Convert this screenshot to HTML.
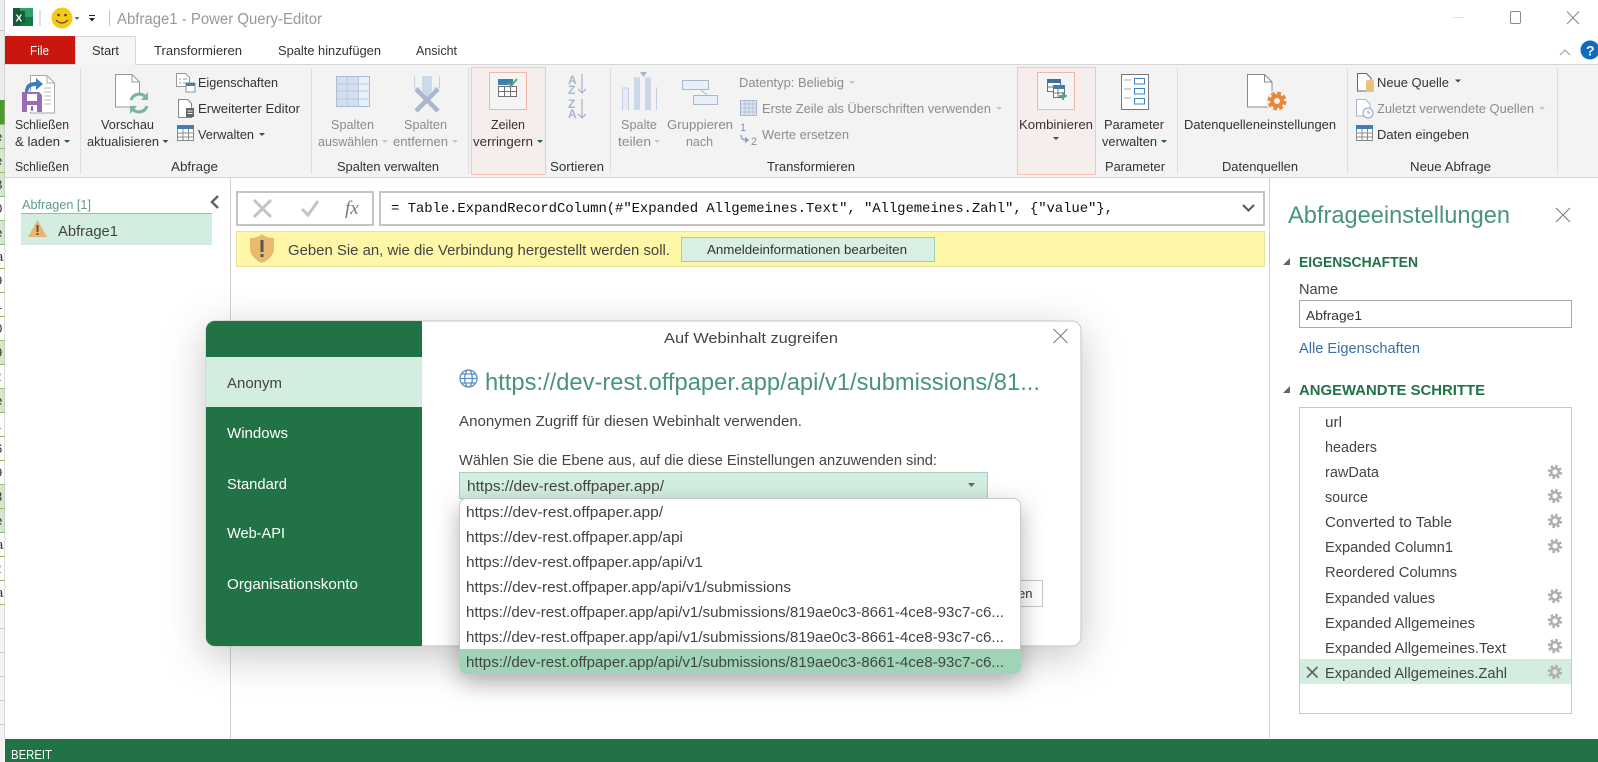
<!DOCTYPE html>
<html><head><meta charset="utf-8"><title>Abfrage1 - Power Query-Editor</title>
<style>
html,body{margin:0;padding:0;width:1598px;height:762px;overflow:hidden;background:#fff}
svg{display:block}
text{font-family:"Liberation Sans",sans-serif;font-size:13px;fill:#444;white-space:pre}
.g{fill:#8c8c8c}.d{fill:#333}
.m{font-size:14.5px}
.mono{font-family:"Liberation Mono",monospace;font-size:14px;fill:#111}
.w{fill:#fff}
.h{font-size:14.5px;font-weight:bold;fill:#217346}
</style></head><body>
<svg width="1598" height="762" viewBox="0 0 1598 762" xmlns="http://www.w3.org/2000/svg">
<defs>
<clipPath id="strip"><rect x="0" y="124" width="5" height="490"/></clipPath>
<g id="gear"><circle r="5.6" fill="none" stroke="#b0b0b0" stroke-width="3.2" stroke-dasharray="2.4 2"/><circle r="3.8" fill="none" stroke="#b0b0b0" stroke-width="2.6"/></g>
<g id="tbl"><rect x="0.5" y="0.5" width="16" height="15" fill="#fff" stroke="#8a8a8a"/><rect x="0" y="0" width="17" height="4" fill="#3f7fb8"/><path d="M0 8h17M0 12h17M6 4v12M11.5 4v12" stroke="#8a8a8a" fill="none"/></g>
<filter id="dsh" x="-15%" y="-20%" width="130%" height="145%"><feDropShadow dx="0" dy="10" stdDeviation="20" flood-color="#000" flood-opacity=".22"/></filter>
<filter id="psh" x="-10%" y="-15%" width="120%" height="140%"><feDropShadow dx="0" dy="8" stdDeviation="12" flood-color="#000" flood-opacity=".3"/></filter>
</defs>

<!-- spreadsheet behind -->
<rect width="5" height="762" fill="#f4f4f4"/>
<rect y="0" width="5" height="100" fill="#ececec"/>
<rect y="30" width="5" height="1" fill="#c8c8c8"/>
<rect y="100" width="5" height="24" fill="#4b9a2c"/>
<g fill="#d6e6cc">
<rect y="124" width="5" height="72"/><rect y="220" width="5" height="24"/><rect y="340" width="5" height="24"/><rect y="388" width="5" height="24"/><rect y="484" width="5" height="24"/><rect y="508" width="5" height="24"/>
</g>
<g fill="#fff"><rect y="196" width="5" height="24"/><rect y="244" width="5" height="96"/><rect y="364" width="5" height="24"/><rect y="412" width="5" height="72"/><rect y="532" width="5" height="72"/></g>
<path d="M0 124.500h5M0 148.500h5M0 172.500h5M0 196.500h5M0 220.500h5M0 244.500h5M0 268.500h5M0 292.500h5M0 316.500h5M0 340.500h5M0 364.500h5M0 388.500h5M0 412.500h5M0 436.500h5M0 460.500h5M0 484.500h5M0 508.500h5M0 532.500h5M0 556.500h5M0 580.500h5M0 604.500h5" stroke="#8cc46a"/>
<path d="M0 628.500h5M0 652.500h5M0 676.500h5M0 700.500h5M0 724.500h5" stroke="#c8c8c8"/>
<g clip-path="url(#strip)" style="font-size:15px">
<text x="-5" y="141" class="d">e</text><text x="-5" y="165" class="d">e</text><text x="-6" y="189" fill="#822">B</text><text x="-5" y="213" class="d">0</text><text x="-5" y="237" class="d">e</text><text x="-4" y="261" class="d">a</text><text x="-5" y="285" class="d">9</text><text x="-5" y="309" fill="#822">1</text><text x="-5" y="333" class="d">0</text><text x="-5" y="357" class="d">9</text><text x="-6" y="381" class="d">2</text><text x="-5" y="405" class="d">e</text><text x="-6" y="429" class="d">1</text><text x="-5" y="453" class="d">6</text><text x="-5" y="477" class="d">9</text><text x="-5" y="501" class="d">3</text><text x="-5" y="525" class="d">e</text><text x="-4" y="549" class="d">a</text><text x="-6" y="573" class="d">2</text><text x="-4" y="597" class="d">a</text>
</g>
<rect x="4.500" width="1" height="739" fill="#bbb"/>

<!-- window -->
<rect x="5" y="0" width="1593" height="739" fill="#fff"/>
<!-- title bar -->
<rect x="13" y="8" width="7" height="18" fill="#185c37"/><rect x="20" y="8" width="13" height="18" fill="#33a06a"/><rect x="20" y="17" width="13" height="9" fill="#107c41"/><rect x="13" y="11" width="12" height="12" fill="#185c37"/>
<text x="15.500" y="21.500" class="w" style="font-size:10px;font-weight:bold">X</text>
<rect x="39.500" y="10" width="1" height="16" fill="#b8c8bc"/>
<circle cx="62" cy="18" r="10.500" fill="#f6c915"/>
<circle cx="58.500" cy="15" r="1.300" fill="#444"/><circle cx="65.500" cy="15" r="1.300" fill="#444"/>
<path d="M56 20q6 6 12 0" fill="none" stroke="#444" stroke-width="1.200"/>
<path d="M74.500 17h5l-2.500 3z" fill="#666"/>
<rect x="89" y="15" width="6" height="1" fill="#222"/><path d="M89 18h6l-3 3.500z" fill="#222"/>
<rect x="109" y="10" width="1" height="16" fill="#b8c8bc"/>
<text x="117" y="24" fill="#999" style="font-size:15.500px;fill:#999" textLength="205" lengthAdjust="spacingAndGlyphs">Abfrage1 - Power Query-Editor</text>
<rect x="1452" y="17" width="12" height="1" fill="#e4e4e4"/>
<rect x="1510.500" y="11.500" width="10" height="12" rx="1.500" fill="none" stroke="#8a8a8a"/>
<path d="M1567 11.500l12 12.500M1579 11.500l-12 12.500" stroke="#888" fill="none"/>

<!-- tabs -->
<rect x="5" y="36" width="70" height="28" fill="#c9170f"/>
<text x="30" y="55" class="w" style="fill:#fff" textLength="19" lengthAdjust="spacingAndGlyphs">File</text>
<path d="M75.500 64V36.500H135.500V64" fill="#f5f5f5" stroke="#d8d8d8"/>
<text x="92" y="55" class="d" textLength="27" lengthAdjust="spacingAndGlyphs">Start</text>
<text x="154" y="55" class="d" textLength="88" lengthAdjust="spacingAndGlyphs">Transformieren</text>
<text x="278" y="55" class="d" textLength="103" lengthAdjust="spacingAndGlyphs">Spalte hinzufügen</text>
<text x="416" y="55" class="d" textLength="41" lengthAdjust="spacingAndGlyphs">Ansicht</text>
<path d="M1560 55l5-5 5 5" fill="none" stroke="#999"/>
<circle cx="1590" cy="50" r="9.500" fill="#0f6cbf"/>
<text x="1586" y="55.500" class="w" style="fill:#fff;font-size:14px;font-weight:bold">?</text>

<!-- ribbon -->
<rect x="5" y="64" width="1593" height="113" fill="#f3f3f3"/>
<rect x="5" y="64" width="1593" height="1" fill="#dadada"/><rect x="136" y="64" width="1462" height="1" fill="#d6d6d6"/>
<rect x="76" y="64" width="59" height="1" fill="#f5f5f5"/>
<rect x="5" y="177" width="1593" height="1" fill="#d8d8d8"/>
<g fill="#dedede"><rect x="80" y="68" width="1" height="106"/><rect x="311" y="68" width="1" height="106"/><rect x="468" y="68" width="1" height="106"/><rect x="610" y="68" width="1" height="106"/><rect x="1177" y="68" width="1" height="106"/><rect x="1347" y="68" width="1" height="106"/><rect x="1557" y="68" width="1" height="106"/></g>
<!-- highlights -->
<rect x="471.500" y="67.500" width="74" height="107" fill="#f6eeec" stroke="#f7c5bc"/>
<rect x="489.500" y="72.500" width="37" height="37" fill="#f4f4f4" stroke="#f6b4a8"/>
<rect x="1017.500" y="67.500" width="78" height="107" fill="#f6eeec" stroke="#f7c5bc"/>
<rect x="1037.500" y="72.500" width="37" height="37" fill="#f4f4f4" stroke="#f6b4a8"/>

<!-- Schließen & laden icon -->
<path d="M30.500 75.500H47l7.500 7.500v30H30.500z" fill="#fff" stroke="#aaa"/><path d="M47 75.500v7.500h7.500" fill="none" stroke="#aaa"/>
<path d="M44 88h7M44 92h7M44 96h7M44 100h7M44 104h7" stroke="#bbb"/>
<path d="M25 92c0-8 5-10 11-10V78l7 6-7 6v-4c-4 0-7 1-8 6z" fill="#3a7fbf"/>
<path d="M22 92h17l3 3v17H22z" fill="#9a6cb5"/><rect x="27" y="94" width="10" height="7" fill="#fff"/><rect x="27" y="105" width="10" height="7" fill="#fff"/><rect x="31" y="106" width="2" height="5" fill="#9a6cb5"/>
<text x="15" y="129" class="d" textLength="54" lengthAdjust="spacingAndGlyphs">Schließen</text>
<text x="15" y="146" class="d" textLength="45" lengthAdjust="spacingAndGlyphs">&amp; laden</text>
<path d="M64 140h6l-3 3z" fill="#2d5b3f"/>
<text x="15" y="171" class="d" textLength="54" lengthAdjust="spacingAndGlyphs">Schließen</text>

<!-- Vorschau -->
<path d="M115.500 74.500H132l7.500 7.500v25H115.500z" fill="#fff" stroke="#999"/><path d="M132 74.500V82h7.500" fill="none" stroke="#999"/>
<circle cx="139" cy="103" r="10" fill="#f3f3f3"/>
<path d="M131 100a8.500 8.500 0 0 1 14.500-3M147 106a8.500 8.500 0 0 1-14.500 3" fill="none" stroke="#7db5a0" stroke-width="3.200"/>
<path d="M148 92v8h-7zM130 114v-8h7z" fill="#7db5a0"/>
<text x="101" y="129" class="d" textLength="53" lengthAdjust="spacingAndGlyphs">Vorschau</text>
<text x="87" y="146" class="d" textLength="72" lengthAdjust="spacingAndGlyphs">aktualisieren</text>
<path d="M162.500 140h6l-3 3z" fill="#2d5b3f"/>
<!-- Eigenschaften -->
<path d="M176.500 73.500h9l4 4v9h-13z" fill="#fff" stroke="#999"/><path d="M179 79h2M183 79h4M179 83h2M183 83h4" stroke="#999"/>
<rect x="186" y="83" width="9" height="9" fill="#fff" stroke="#777" stroke-width=".8"/><rect x="186" y="83" width="9" height="3" fill="#3f7fb8"/>
<text x="198" y="87" class="d" textLength="80" lengthAdjust="spacingAndGlyphs">Eigenschaften</text>
<path d="M178.500 99.500h9l4 4v14h-13z" fill="#fff" stroke="#888"/><rect x="186" y="108" width="8" height="9" fill="#666"/><path d="M187.500 111h5M187.500 113.500h5" stroke="#eee"/>
<text x="198" y="113" class="d" textLength="102" lengthAdjust="spacingAndGlyphs">Erweiterter Editor</text>
<use href="#tbl" x="177" y="125"/>
<text x="198" y="139" class="d" textLength="56" lengthAdjust="spacingAndGlyphs">Verwalten</text>
<path d="M259 133h6l-3 3z" fill="#2d5b3f"/>
<text x="171" y="171" class="d" textLength="47" lengthAdjust="spacingAndGlyphs">Abfrage</text>

<!-- Spalten auswählen -->
<rect x="336.500" y="76.500" width="33" height="30" fill="#d3deee" stroke="#a9bad6"/><rect x="359" y="77" width="10" height="29" fill="#e9f1fb"/><path d="M336 84h34M336 91h34M336 99h34M347 77v29M358.500 77v29" stroke="#b9c8df" fill="none"/>
<text x="331" y="129" class="g" textLength="43" lengthAdjust="spacingAndGlyphs">Spalten</text>
<text x="318" y="146" class="g" textLength="60" lengthAdjust="spacingAndGlyphs">auswählen</text>
<path d="M382 140h6l-3 3z" fill="#bcccc4"/>
<!-- Spalten entfernen -->
<path d="M414.500 76v12h6M439.500 76v12h-6" fill="none" stroke="#c5d0e2"/>
<path d="M422 76h10v15l-5 6-5-6z" fill="#cdd8e8"/>
<path d="M416 111l22-22M416 89l22 22" stroke="#aab7cc" stroke-width="4.500" fill="none"/>
<text x="404" y="129" class="g" textLength="43" lengthAdjust="spacingAndGlyphs">Spalten</text>
<text x="393" y="146" class="g" textLength="55" lengthAdjust="spacingAndGlyphs">entfernen</text>
<path d="M452 140h6l-3 3z" fill="#bcccc4"/>
<!-- Zeilen -->
<rect x="498" y="79" width="15" height="6" fill="#3f7fb0"/>
<rect x="498.500" y="86.500" width="18" height="10" fill="#fff" stroke="#707070"/><path d="M498 91.500h19M504.500 86v11M510.500 86v11" stroke="#707070"/>
<path d="M508 83l3 3 6-7" fill="none" stroke="#5fa58a" stroke-width="2"/>
<text x="491" y="129" class="d" textLength="34" lengthAdjust="spacingAndGlyphs">Zeilen</text>
<text x="473" y="146" class="d" textLength="60" lengthAdjust="spacingAndGlyphs">verringern</text>
<path d="M537 140h6l-3 3z" fill="#2d5b3f"/>
<!-- Sort -->
<text x="568" y="84" style="font-size:12px;font-weight:bold;fill:#a9b7cd">A</text><text x="568" y="94" style="font-size:12px;font-weight:bold;fill:#a9b7cd">Z</text>
<path d="M582 74v19M578 89l4 4 4-4" fill="none" stroke="#a9b7cd" stroke-width="1.300"/>
<text x="568" y="108" style="font-size:12px;font-weight:bold;fill:#a9b7cd">Z</text><text x="568" y="118" style="font-size:12px;font-weight:bold;fill:#a9b7cd">A</text>
<path d="M582 99v19M578 114l4 4 4-4" fill="none" stroke="#a9b7cd" stroke-width="1.300"/>
<text x="550" y="171" class="d" textLength="54" lengthAdjust="spacingAndGlyphs">Sortieren</text>
<text x="337" y="171" class="d" textLength="102" lengthAdjust="spacingAndGlyphs">Spalten verwalten</text>

<!-- Spalte teilen -->
<path d="M640 72h7l-3.500 5z" fill="#a9b7cd"/>
<path d="M622.500 110V88h6v22M634.500 110V78h5v32M645.500 110V78h5v32M656.500 110V88h1" fill="#e5ecf5" stroke="#c3d0e2"/>
<rect x="634" y="78" width="6" height="32" fill="#cbd8ea"/><rect x="645" y="78" width="6" height="32" fill="#cbd8ea"/>
<text x="621" y="129" class="g" textLength="36" lengthAdjust="spacingAndGlyphs">Spalte</text>
<text x="618" y="146" class="g" textLength="33" lengthAdjust="spacingAndGlyphs">teilen</text>
<path d="M654 140h6l-3 3z" fill="#bcccc4"/>
<!-- Gruppieren -->
<rect x="682.500" y="80.500" width="26" height="9" fill="#e9eff7" stroke="#a9b7cd"/><rect x="693.500" y="95.500" width="24" height="9" fill="#e9eff7" stroke="#a9b7cd"/><path d="M701 90l6 5" stroke="#a9b7cd"/>
<text x="667" y="129" class="g" textLength="66" lengthAdjust="spacingAndGlyphs">Gruppieren</text>
<text x="686" y="146" class="g" textLength="27" lengthAdjust="spacingAndGlyphs">nach</text>
<text x="739" y="87" class="g" textLength="105" lengthAdjust="spacingAndGlyphs">Datentyp: Beliebig</text>
<path d="M849 81h6l-3 3z" fill="#bcccc4"/>
<rect x="740.500" y="100.500" width="16" height="15" fill="#dbe3f0" stroke="#a9b7cd"/><path d="M741 104h15M741 108h15M741 112h15M745 101v15M749 101v15M753 101v15" stroke="#b7c4d8" fill="none"/>
<text x="762" y="113" class="g" textLength="229" lengthAdjust="spacingAndGlyphs">Erste Zeile als Überschriften verwenden</text>
<path d="M996 107h6l-3 3z" fill="#bcccc4"/>
<text x="740" y="131" style="font-size:11px;fill:#7f93b5">1</text><text x="751" y="145" style="font-size:11px;fill:#7f93b5">2</text>
<path d="M741 135c0 4 2 5 6 5M745 137.500l3 2.500-3 2.500" fill="none" stroke="#7f93b5" stroke-width="1.200"/>
<text x="762" y="139" class="g" textLength="87" lengthAdjust="spacingAndGlyphs">Werte ersetzen</text>
<text x="767" y="171" class="d" textLength="88" lengthAdjust="spacingAndGlyphs">Transformieren</text>

<!-- Kombinieren -->
<rect x="1047.500" y="79.500" width="13" height="12" fill="#fff" stroke="#707070"/><rect x="1047" y="79" width="14" height="4" fill="#3f6f9f"/>
<rect x="1053.500" y="85.500" width="11" height="12" fill="#fff" stroke="#707070"/><rect x="1053" y="85" width="12" height="4" fill="#3f7fb0"/><path d="M1054 93h10M1058 89v8M1048 87h5" stroke="#707070"/>
<path d="M1063 92v8M1059 96h8" stroke="#5fa58a" stroke-width="2"/>
<text x="1019" y="129" class="d" textLength="74" lengthAdjust="spacingAndGlyphs">Kombinieren</text>
<path d="M1053 137h6l-3 3z" fill="#2d5b3f"/>
<!-- Parameter -->
<rect x="1121.500" y="74.500" width="27" height="35" fill="#fff" stroke="#777"/>
<path d="M1124 80h7M1124 89h7M1124 98h7" stroke="#aaa"/>
<g fill="none" stroke="#3f85c5"><rect x="1134.500" y="78.500" width="10" height="5.500"/><rect x="1134.500" y="88.500" width="10" height="5.500"/><rect x="1134.500" y="98.500" width="10" height="5.500"/></g>
<text x="1104" y="129" class="d" textLength="60" lengthAdjust="spacingAndGlyphs">Parameter</text>
<text x="1102" y="146" class="d" textLength="55" lengthAdjust="spacingAndGlyphs">verwalten</text>
<path d="M1161 140h6l-3 3z" fill="#2d5b3f"/>
<text x="1105" y="171" class="d" textLength="60" lengthAdjust="spacingAndGlyphs">Parameter</text>
<!-- Datenquellen -->
<path d="M1247.500 74.500h17l7.500 7.500v25h-24.500z" fill="#fff" stroke="#888"/><path d="M1264.500 74.500V82h7.500" fill="none" stroke="#888"/>
<circle cx="1277" cy="101" r="11" fill="#f3f3f3"/>
<circle cx="1277" cy="101" r="7" fill="none" stroke="#e8873a" stroke-width="5" stroke-dasharray="3.300 2.200"/><circle cx="1277" cy="101" r="5" fill="none" stroke="#e8873a" stroke-width="4"/>
<text x="1184" y="129" class="d" textLength="152" lengthAdjust="spacingAndGlyphs">Datenquelleneinstellungen</text>
<text x="1222" y="171" class="d" textLength="76" lengthAdjust="spacingAndGlyphs">Datenquellen</text>
<!-- Neue Abfrage -->
<path d="M1357.500 73.500h9l4.500 4.500v13h-13.500z" fill="#fff" stroke="#666"/>
<rect x="1366" y="80" width="8" height="12" rx="2" fill="#e8c27a"/>
<text x="1377" y="87" class="d" textLength="72" lengthAdjust="spacingAndGlyphs">Neue Quelle</text>
<path d="M1455 79.500h6l-3 3z" fill="#2d5b3f"/>
<path d="M1356.500 99.500h9l4.500 4.500v12h-13.500z" fill="#fff" stroke="#a9b7cd"/>
<circle cx="1368" cy="113" r="5" fill="#fff" stroke="#8fa2bd"/><path d="M1368 110v3h2.500" stroke="#8fa2bd" fill="none"/>
<text x="1377" y="113" class="g" textLength="157" lengthAdjust="spacingAndGlyphs">Zuletzt verwendete Quellen</text>
<path d="M1539 107h6l-3 3z" fill="#bcccc4"/>
<use href="#tbl" x="1356" y="125"/>
<text x="1377" y="139" class="d" textLength="92" lengthAdjust="spacingAndGlyphs">Daten eingeben</text>
<text x="1410" y="171" class="d" textLength="81" lengthAdjust="spacingAndGlyphs">Neue Abfrage</text>

<!-- left panel -->
<rect x="230" y="178" width="1" height="561" fill="#d0d0d0"/>
<text x="22" y="209" style="font-size:13px;fill:#5d9c84" textLength="69" lengthAdjust="spacingAndGlyphs">Abfragen [1]</text>
<rect x="21" y="213" width="191" height="1" fill="#b0b0b0"/>
<rect x="21" y="214" width="191" height="31" fill="#d3eee0"/>
<path d="M37.500 220l9.500 17H28z" fill="#e9b56f"/><rect x="36.500" y="225" width="2" height="7" fill="#555"/><rect x="36.500" y="233" width="2" height="2" fill="#555"/>
<text x="58" y="236" class="m" textLength="60" lengthAdjust="spacingAndGlyphs">Abfrage1</text>
<path d="M218 196l-6 6 6 6" fill="none" stroke="#666" stroke-width="2.600"/>

<!-- formula bar -->
<rect x="237" y="192" width="136" height="33" fill="#fff" stroke="#c4c4c4" stroke-width="2"/>
<path d="M254 200l17 17M271 200l-17 17" stroke="#c4c4c4" stroke-width="3" fill="none"/>
<path d="M302 209l6 6 10-14" stroke="#c4c4c4" stroke-width="3" fill="none"/>
<text x="345" y="214" style="font-family:'Liberation Serif',serif;font-size:19px;font-style:italic;fill:#777">fx</text>
<rect x="380" y="192" width="884" height="33" fill="#fff" stroke="#c4c4c4" stroke-width="2"/>
<text x="391" y="212" class="mono" textLength="722">= Table.ExpandRecordColumn(#"Expanded Allgemeines.Text", "Allgemeines.Zahl", {"value"},</text>
<path d="M1243 205l5.500 5.500 5.500-5.500" fill="none" stroke="#555" stroke-width="2"/>

<!-- warning bar -->
<rect x="236.500" y="231.500" width="1028" height="35" fill="#fff7a8" stroke="#e8e2a0"/>
<path d="M262 234c3 3 7 4 12 4v10c0 7-5 12-12 15-7-3-12-8-12-15v-10c5 0 9-1 12-4z" fill="#e9b96e"/>
<rect x="260.500" y="240" width="3" height="12" fill="#555"/><rect x="260.500" y="254" width="3" height="3" fill="#555"/>
<text x="288" y="255" class="m" textLength="382" lengthAdjust="spacingAndGlyphs">Geben Sie an, wie die Verbindung hergestellt werden soll.</text>
<rect x="681.500" y="237.500" width="253" height="24" fill="#d8efe2" stroke="#9fd0b5"/>
<text x="707" y="254" class="d" textLength="200" lengthAdjust="spacingAndGlyphs" style="font-size:12.500px">Anmeldeinformationen bearbeiten</text>

<!-- right panel -->
<rect x="1269" y="178" width="1" height="560" fill="#d0d0d0"/>
<text x="1288" y="223" style="font-size:24px;fill:#4a9478" textLength="222" lengthAdjust="spacingAndGlyphs">Abfrageeinstellungen</text>
<path d="M1556 208l14 14M1570 208l-14 14" stroke="#777" fill="none"/>
<path d="M1290 258v7h-7z" fill="#666"/>
<text x="1299" y="267" class="h" textLength="119" lengthAdjust="spacingAndGlyphs">EIGENSCHAFTEN</text>
<text x="1299" y="294" class="m" textLength="39" lengthAdjust="spacingAndGlyphs">Name</text>
<rect x="1299.500" y="300.500" width="272" height="27" fill="#fff" stroke="#aaa"/>
<text x="1306" y="320" class="d" textLength="56" lengthAdjust="spacingAndGlyphs">Abfrage1</text>
<text x="1299" y="353" style="font-size:14.500px;fill:#3c6ea8" textLength="121" lengthAdjust="spacingAndGlyphs">Alle Eigenschaften</text>
<path d="M1290 386v7h-7z" fill="#666"/>
<text x="1299" y="395" class="h" textLength="186" lengthAdjust="spacingAndGlyphs">ANGEWANDTE SCHRITTE</text>
<rect x="1299.500" y="407.500" width="272" height="306" fill="#fff" stroke="#c8c8c8"/>
<rect x="1300" y="659" width="271" height="25" fill="#d3eee0"/>
<g class="m">
<text x="1325" y="427" class="m" textLength="17" lengthAdjust="spacingAndGlyphs">url</text>
<text x="1325" y="452" class="m" textLength="52" lengthAdjust="spacingAndGlyphs">headers</text>
<text x="1325" y="477" class="m" textLength="54" lengthAdjust="spacingAndGlyphs">rawData</text>
<text x="1325" y="502" class="m" textLength="43" lengthAdjust="spacingAndGlyphs">source</text>
<text x="1325" y="527" class="m" textLength="127" lengthAdjust="spacingAndGlyphs">Converted to Table</text>
<text x="1325" y="552" class="m" textLength="128" lengthAdjust="spacingAndGlyphs">Expanded Column1</text>
<text x="1325" y="577" class="m" textLength="132" lengthAdjust="spacingAndGlyphs">Reordered Columns</text>
<text x="1325" y="603" class="m" textLength="110" lengthAdjust="spacingAndGlyphs">Expanded values</text>
<text x="1325" y="628" class="m" textLength="150" lengthAdjust="spacingAndGlyphs">Expanded Allgemeines</text>
<text x="1325" y="653" class="m" textLength="181" lengthAdjust="spacingAndGlyphs">Expanded Allgemeines.Text</text>
<text x="1325" y="678" class="m" textLength="182" lengthAdjust="spacingAndGlyphs">Expanded Allgemeines.Zahl</text>
</g>
<use href="#gear" x="1555" y="472"/><use href="#gear" x="1555" y="496"/><use href="#gear" x="1555" y="521"/><use href="#gear" x="1555" y="546"/><use href="#gear" x="1555" y="596"/><use href="#gear" x="1555" y="621"/><use href="#gear" x="1555" y="646"/><use href="#gear" x="1555" y="672"/>
<path d="M1307 667l10.500 10.500M1317.500 667l-10.500 10.500" stroke="#666" stroke-width="1.800" fill="none"/>

<!-- status bar -->
<rect x="5" y="739" width="1593" height="23" fill="#217346"/>
<text x="11" y="759" class="w" style="fill:#fff" textLength="41" lengthAdjust="spacingAndGlyphs">BEREIT</text>

<!-- dialog -->
<g filter="url(#dsh)"><rect x="206" y="321" width="875" height="325" rx="9" fill="#fff" stroke="#c6c6c6"/></g>
<path d="M422 321H215a9 9 0 0 0-9 9V637a9 9 0 0 0 9 9H422z" fill="#217346"/>
<rect x="206" y="357" width="216" height="50" fill="#d3eee0"/>
<text x="227" y="388" class="m" textLength="55" lengthAdjust="spacingAndGlyphs">Anonym</text>
<text x="227" y="438" class="m" style="fill:#fff" textLength="61" lengthAdjust="spacingAndGlyphs">Windows</text>
<text x="227" y="489" class="m" style="fill:#fff" textLength="60" lengthAdjust="spacingAndGlyphs">Standard</text>
<text x="227" y="538" class="m" style="fill:#fff" textLength="58" lengthAdjust="spacingAndGlyphs">Web-API</text>
<text x="227" y="589" class="m" style="fill:#fff" textLength="131" lengthAdjust="spacingAndGlyphs">Organisationskonto</text>
<text x="664" y="343" class="m" textLength="174" lengthAdjust="spacingAndGlyphs">Auf Webinhalt zugreifen</text>
<path d="M1053.500 329l14 14M1067.500 329l-14 14" stroke="#777" fill="none"/>
<g fill="none" stroke="#5b8fc4" stroke-width="1.300"><circle cx="468.500" cy="378.500" r="8.500"/><ellipse cx="468.500" cy="378.500" rx="3.800" ry="8.500"/><path d="M460 378.500h17M461.500 374h14M461.500 383h14"/></g>
<text x="485" y="390" style="font-size:24px;fill:#4a9478" textLength="555" lengthAdjust="spacingAndGlyphs">https://dev-rest.offpaper.app/api/v1/submissions/81...</text>
<text x="459" y="426" class="m" textLength="343" lengthAdjust="spacingAndGlyphs">Anonymen Zugriff für diesen Webinhalt verwenden.</text>
<text x="459" y="465" class="m" textLength="478" lengthAdjust="spacingAndGlyphs">Wählen Sie die Ebene aus, auf die diese Einstellungen anzuwenden sind:</text>
<rect x="459.500" y="472.500" width="528" height="26" fill="#d3eee0" stroke="#a4d2b8"/>
<text x="467" y="491" class="m" textLength="197" lengthAdjust="spacingAndGlyphs">https://dev-rest.offpaper.app/</text>
<path d="M968 483h7l-3.500 4z" fill="#666"/>
<rect x="1000.500" y="580.500" width="42" height="26" fill="#fff" stroke="#c8c8c8"/>
<text x="1018" y="598" class="d" style="font-size:13px">en</text>

<!-- dropdown -->
<g filter="url(#psh)"><rect x="459.500" y="498.500" width="561" height="175.500" rx="7" fill="#fff" stroke="#c8c8c8"/></g>
<path d="M459.500 649H1021V667a7 7 0 0 1-7 7H466.500a7 7 0 0 1-7-7z" fill="#9fd4b6"/>
<text x="466" y="517" class="m" textLength="197" lengthAdjust="spacingAndGlyphs">https://dev-rest.offpaper.app/</text>
<text x="466" y="542" class="m" textLength="217" lengthAdjust="spacingAndGlyphs">https://dev-rest.offpaper.app/api</text>
<text x="466" y="567" class="m" textLength="237" lengthAdjust="spacingAndGlyphs">https://dev-rest.offpaper.app/api/v1</text>
<text x="466" y="592" class="m" textLength="325" lengthAdjust="spacingAndGlyphs">https://dev-rest.offpaper.app/api/v1/submissions</text>
<text x="466" y="617" class="m" textLength="538" lengthAdjust="spacingAndGlyphs">https://dev-rest.offpaper.app/api/v1/submissions/819ae0c3-8661-4ce8-93c7-c6...</text>
<text x="466" y="642" class="m" textLength="538" lengthAdjust="spacingAndGlyphs">https://dev-rest.offpaper.app/api/v1/submissions/819ae0c3-8661-4ce8-93c7-c6...</text>
<text x="466" y="667" class="m" textLength="538" lengthAdjust="spacingAndGlyphs">https://dev-rest.offpaper.app/api/v1/submissions/819ae0c3-8661-4ce8-93c7-c6...</text>
</svg>
</body></html>
